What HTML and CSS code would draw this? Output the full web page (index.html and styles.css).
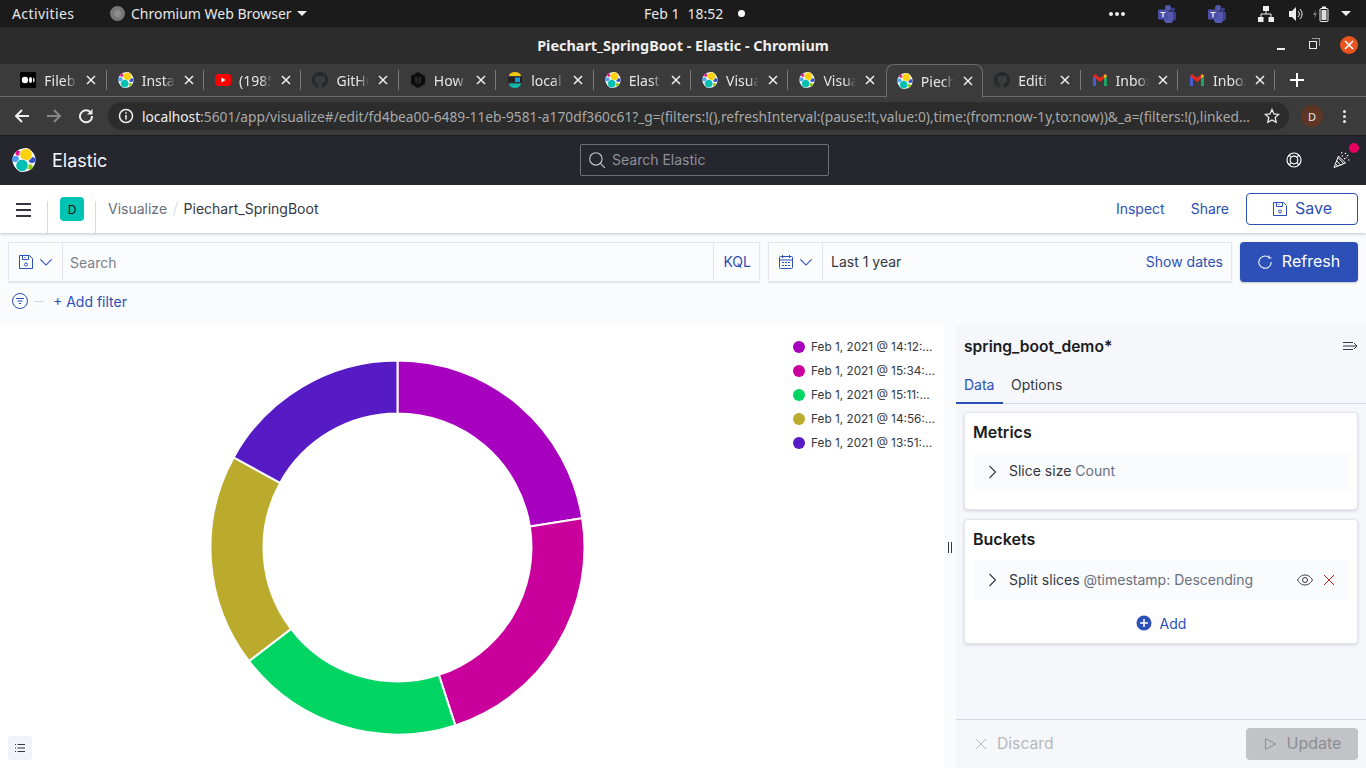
FILE: index.html
```html
<!DOCTYPE html>
<html lang="en">
<head>
  <meta charset="UTF-8">
  <title>Piechart_SpringBoot - Elastic - Chromium</title>
  <link rel="stylesheet" href="styles.css">
</head>
<body>
  <!-- Shared icons -->
  <svg class="defs" width="0" height="0">
    <symbol id="elastic" viewBox="0 0 24 24">
      <circle cx="12" cy="12" r="11.500" fill="#fff"/>
      <circle cx="3.600" cy="11" r="3.300" fill="#4ea1f0"/>
      <circle cx="6" cy="5" r="2.600" fill="#e7168b"/>
      <ellipse cx="20" cy="12" rx="3.400" ry="3" fill="#3453c4"/>
      <circle cx="18.200" cy="18.800" r="2.600" fill="#93c90e"/>
      <circle cx="14" cy="6.600" r="6.200" fill="#fed10a" stroke="#fff" stroke-width="0.800"/>
      <circle cx="10" cy="17.400" r="6.200" fill="#00bfb3" stroke="#fff" stroke-width="0.800"/>
    </symbol>
    <symbol id="github" viewBox="0 0 16 16">
      <path fill="#24292e" d="M8 0C3.58 0 0 3.58 0 8c0 3.54 2.29 6.53 5.47 7.59.4.07.55-.17.55-.38 0-.19-.01-.82-.01-1.49-2.01.37-2.53-.49-2.69-.94-.09-.23-.48-.94-.82-1.13-.28-.15-.68-.52-.01-.53.63-.01 1.08.58 1.23.82.72 1.21 1.87.87 2.33.66.07-.52.28-.87.51-1.07-1.78-.2-3.64-.89-3.64-3.95 0-.87.31-1.59.82-2.15-.08-.2-.36-1.02.08-2.12 0 0 .67-.21 2.2.82.64-.18 1.32-.27 2-.27s1.36.09 2 .27c1.53-1.04 2.2-.82 2.2-.82.44 1.1.16 1.92.08 2.12.51.56.82 1.27.82 2.15 0 3.07-1.87 3.75-3.65 3.95.29.25.54.73.54 1.48 0 1.07-.01 1.93-.01 2.2 0 .21.15.46.55.38A8.01 8.01 0 0 0 16 8c0-4.42-3.58-8-8-8z"/>
    </symbol>
    <symbol id="gmail" viewBox="0 0 16 16">
      <path fill="#4a5bd4" d="M1 4h3v10H1z"/>
      <path fill="#1ea362" d="M12 4h3v10h-3z"/>
      <path fill="#e8261c" d="M1 4l2-2 5 4 5-4 2 2-7 6z"/>
      <path fill="#f6c026" d="M13 2l2 2-3 2.400V4z"/>
    </symbol>
    <symbol id="close-x" viewBox="0 0 10 10">
      <path d="M1 1l8 8M9 1L1 9" stroke="currentColor" stroke-width="1.500" fill="none"/>
    </symbol>
    <symbol id="floppy" viewBox="0 0 16 16">
      <path d="M1.500 1.500h10l3 3v10h-13z M4.500 1.500v4h6v-4 M7 3v1" fill="none" stroke="currentColor"/>
      <circle cx="8" cy="10.500" r="1.500" fill="none" stroke="currentColor"/>
    </symbol>
    <symbol id="chevron-right" viewBox="0 0 16 16">
      <path d="M5.500 2l6 6-6 6" fill="none" stroke="currentColor" stroke-width="1.100"/>
    </symbol>
    <symbol id="chevron-down" viewBox="0 0 16 16">
      <path d="M1.500 5l6.500 6.500L14.500 5" fill="none" stroke="currentColor" stroke-width="1.300"/>
    </symbol>
    <symbol id="teams" viewBox="0 0 18 18">
      <circle cx="10" cy="3" r="3" fill="#5558af"/>
      <circle cx="15" cy="4.500" r="2" fill="#3d3f8f"/>
      <path fill="#3d3f8f" d="M12 7h6v6a3 3 0 0 1-6 0z"/>
      <path fill="#5558af" d="M6 6.500h9v8a4.500 4.500 0 0 1-9 0z"/>
      <rect x="0" y="4.500" width="10" height="10" rx="1" fill="#4b4fa6"/>
      <path fill="#fff" d="M2.500 7h5v1H5.600v4.200H4.400V8H2.500z"/>
    </symbol>
  </svg>

  <!-- Desktop top bar -->
  <div class="topbar">
    <div class="topbar-left">
      <span class="activities">Activities</span>
      <span class="app-icon"></span>
      <span>Chromium Web Browser</span>
      <span class="caret"></span>
    </div>
    <div class="topbar-clock">
      <span>Feb 1</span>
      <span>18:52</span>
      <span class="clock-dot"></span>
    </div>
    <div class="topbar-tray">
      <span class="tray-dots"><i></i><i></i><i></i></span>
      <svg class="tray-teams" width="18" height="18"><use href="#teams"/></svg>
      <svg class="tray-teams" width="18" height="18"><use href="#teams"/></svg>
      <svg class="tray-net" width="16" height="16" viewBox="0 0 16 16">
        <path d="M5 0h6v5H5zM0 11h5.500v5H0zM10.500 11H16v5h-5.500z" fill="#eee"/>
        <path d="M8 5v3M3 11V8h10v3" stroke="#eee" fill="none"/>
      </svg>
      <svg class="tray-vol" width="16" height="16" viewBox="0 0 16 16">
        <path d="M1 5h3l4-4v14l-4-4H1z" fill="#eee"/>
        <path d="M10 5a4 4 0 0 1 0 6M12 3a7 7 0 0 1 0 10" stroke="#eee" fill="none"/>
      </svg>
      <svg class="tray-bat" width="16" height="16" viewBox="0 0 16 16">
        <path d="M3 3L0 9h2l-1 4 3-6H2z" fill="#777"/>
        <rect x="7" y="2.500" width="8" height="13" rx="1" fill="none" stroke="#eee"/>
        <rect x="9" y="0.500" width="4" height="2" fill="#eee"/>
        <rect x="8.500" y="4" width="5" height="10" fill="#ddd"/>
      </svg>
      <span class="caret"></span>
    </div>
  </div>

  <!-- Window title -->
  <div class="titlebar">
    <span class="title">Piechart_SpringBoot - Elastic - Chromium</span>
    <div class="win-btns">
      <span class="win-min"></span>
      <span class="win-max"></span>
      <span class="win-close"><svg width="10" height="10"><use href="#close-x"/></svg></span>
    </div>
  </div>

  <!-- Tabs -->
  <div class="tabstrip">
    <div class="tab">
      <svg class="favicon" viewBox="0 0 16 16"><rect width="16" height="16" rx="1" fill="#000"/><circle cx="5" cy="8" r="3.200" fill="#fff"/><ellipse cx="10.500" cy="8" rx="1.500" ry="3" fill="#fff"/><ellipse cx="13.800" cy="8" rx="0.700" ry="2.600" fill="#fff"/></svg>
      <span class="tab-label">Fileb</span>
      <svg class="tab-x" width="10" height="10"><use href="#close-x"/></svg>
    </div>
    <div class="tab">
      <svg class="favicon"><use href="#elastic"/></svg>
      <span class="tab-label">Insta</span>
      <svg class="tab-x" width="10" height="10"><use href="#close-x"/></svg>
    </div>
    <div class="tab">
      <svg class="favicon" viewBox="0 0 16 16"><rect y="2" width="16" height="12" rx="3" fill="#f00"/><path d="M6.500 5.500v5l4-2.500z" fill="#fff"/></svg>
      <span class="tab-label">(1985</span>
      <svg class="tab-x" width="10" height="10"><use href="#close-x"/></svg>
    </div>
    <div class="tab">
      <svg class="favicon"><use href="#github"/></svg>
      <span class="tab-label">GitHu</span>
      <svg class="tab-x" width="10" height="10"><use href="#close-x"/></svg>
    </div>
    <div class="tab">
      <svg class="favicon" viewBox="0 0 16 16"><path d="M8 0l7 4v8l-7 4-7-4V4z" fill="#0d0d0d"/><path d="M5 5h6v5l-3 3-3-3z" fill="#2b2b2b"/><path d="M7.500 4h1v8h-1z" fill="#0d0d0d"/></svg>
      <span class="tab-label">How</span>
      <svg class="tab-x" width="10" height="10"><use href="#close-x"/></svg>
    </div>
    <div class="tab">
      <svg class="favicon" viewBox="0 0 16 16"><path d="M2 4a6 4 0 0 1 12 0z" fill="#f3c714"/><rect x="1" y="5" width="14" height="5.500" fill="#222"/><rect x="8" y="5.500" width="5" height="4.500" fill="#1b9ad6"/><path d="M2 11.500h12a6 4.500 0 0 1-12 0z" fill="#11b8aa"/></svg>
      <span class="tab-label">local</span>
      <svg class="tab-x" width="10" height="10"><use href="#close-x"/></svg>
    </div>
    <div class="tab">
      <svg class="favicon"><use href="#elastic"/></svg>
      <span class="tab-label">Elast</span>
      <svg class="tab-x" width="10" height="10"><use href="#close-x"/></svg>
    </div>
    <div class="tab">
      <svg class="favicon"><use href="#elastic"/></svg>
      <span class="tab-label">Visua</span>
      <svg class="tab-x" width="10" height="10"><use href="#close-x"/></svg>
    </div>
    <div class="tab tab-before-active">
      <svg class="favicon"><use href="#elastic"/></svg>
      <span class="tab-label">Visua</span>
      <svg class="tab-x" width="10" height="10"><use href="#close-x"/></svg>
    </div>
    <div class="tab tab-active">
      <svg class="favicon"><use href="#elastic"/></svg>
      <span class="tab-label">Piech</span>
      <svg class="tab-x" width="10" height="10"><use href="#close-x"/></svg>
    </div>
    <div class="tab">
      <svg class="favicon"><use href="#github"/></svg>
      <span class="tab-label">Editi</span>
      <svg class="tab-x" width="10" height="10"><use href="#close-x"/></svg>
    </div>
    <div class="tab">
      <svg class="favicon"><use href="#gmail"/></svg>
      <span class="tab-label">Inbox</span>
      <svg class="tab-x" width="10" height="10"><use href="#close-x"/></svg>
    </div>
    <div class="tab">
      <svg class="favicon"><use href="#gmail"/></svg>
      <span class="tab-label">Inbox</span>
      <svg class="tab-x" width="10" height="10"><use href="#close-x"/></svg>
    </div>
    <svg class="tab-new" width="14" height="14" viewBox="0 0 14 14"><path d="M7 0v14M0 7h14" stroke="#fff" stroke-width="2"/></svg>
  </div>

  <!-- Address bar -->
  <div class="addressbar">
    <svg class="nav-icon" width="16" height="16" viewBox="0 0 16 16"><path d="M15 8H2M8 2L2 8l6 6" fill="none" stroke="#eee" stroke-width="2"/></svg>
    <svg class="nav-icon" width="16" height="16" viewBox="0 0 16 16"><path d="M1 8h13M8 2l6 6-6 6" fill="none" stroke="#888" stroke-width="2"/></svg>
    <svg class="nav-icon" width="16" height="16" viewBox="0 0 16 16"><path d="M13 5a6 6 0 1 0 1 3" fill="none" stroke="#eee" stroke-width="2"/><path d="M14.500 1v5.500H9z" fill="#eee"/></svg>
    <div class="omnibox">
      <svg class="info" width="16" height="16" viewBox="0 0 16 16"><circle cx="8" cy="8" r="6.500" fill="none" stroke="#eee" stroke-width="1.500"/><path d="M7.200 7h1.600v4.500H7.200zM7.200 4.200h1.600v1.600H7.200z" fill="#eee"/></svg>
      <span class="url"><b>localhost</b>:5601/app/visualize#/edit/fd4bea00-6489-11eb-9581-a170df360c61?_g=(filters:!(),refreshInterval:(pause:!t,value:0),time:(from:now-1y,to:now))&amp;_a=(filters:!(),linked…</span>
      <svg class="star" width="16" height="16" viewBox="0 0 16 16"><path d="M8 1.500l2 4.400 4.700.5-3.500 3.200 1 4.700L8 11.900l-4.200 2.400 1-4.700L1.300 6.400 6 5.900z" fill="none" stroke="#eee" stroke-width="1.300"/></svg>
    </div>
    <span class="profile">D</span>
    <span class="kebab"><i></i><i></i><i></i></span>
  </div>

  <!-- Kibana header -->
  <header class="kbn-header">
    <svg class="kbn-logo" width="24" height="24"><use href="#elastic"/></svg>
    <span class="kbn-name">Elastic</span>
    <div class="kbn-search">
      <svg width="18" height="18" viewBox="0 0 16 16"><circle cx="7" cy="7" r="5.500" fill="none" stroke="#c6c7cc"/><path d="M11 11l4 4" stroke="#c6c7cc"/></svg>
      <span>Search Elastic</span>
    </div>
    <svg class="kbn-help" width="16" height="16" viewBox="0 0 16 16" fill="none" stroke="#fff" stroke-width="1.200"><circle cx="8" cy="8" r="7"/><circle cx="8" cy="8" r="3.800"/><path d="M3 3l2.300 2.300M13 3l-2.300 2.300M3 13l2.300-2.300M13 13l-2.300-2.300"/></svg>
    <div class="kbn-news">
      <svg width="18" height="18" viewBox="0 0 18 18" fill="none" stroke="#fff"><path d="M1 16.500L5.500 5l7 7z"/><path d="M3.500 9.500l4.500 5M2.500 12.500l2.500 3M5 6.500l6 6.500"/><path d="M9 5.500l1.500-2M11 8l3-1.500M8.500 2.500l.5-1.500M12 3l1-1M14 5l2-1M15 9h2" stroke-width="1.100" stroke-dasharray="1.500 1"/></svg>
      <span class="news-dot"></span>
    </div>
  </header>

  <!-- Breadcrumbs -->
  <div class="crumbbar">
    <span class="burger"><i></i><i></i><i></i></span>
    <div class="space-cell"><span class="space-badge">D</span></div>
    <nav class="crumbs">
      <span class="crumb-link">Visualize</span>
      <span class="crumb-sep"></span>
      <span class="crumb-now">Piechart_SpringBoot</span>
    </nav>
    <div class="crumb-actions">
      <a>Inspect</a>
      <a>Share</a>
      <button class="btn-save"><svg width="16" height="16"><use href="#floppy"/></svg><span>Save</span></button>
    </div>
  </div>

  <!-- Query bar -->
  <div class="querybar">
    <div class="query-row">
      <div class="query-box">
        <span class="query-pre"><svg width="16" height="16"><use href="#floppy"/></svg><svg width="14" height="14"><use href="#chevron-down"/></svg></span>
        <span class="query-input">Search</span>
        <span class="query-kql"><span>KQL</span></span>
      </div>
      <div class="date-box">
        <span class="query-pre date-pre">
          <svg width="16" height="16" viewBox="0 0 16 16" fill="none" stroke="currentColor"><rect x="1.500" y="2.500" width="13" height="12" rx="1"/><path d="M1.500 6h13M4.500 1v3M11.500 1v3M4 8.500h2M7 8.500h2M10 8.500h2M4 11.500h2M7 11.500h2M10 11.500h2"/></svg>
          <svg width="14" height="14"><use href="#chevron-down"/></svg>
        </span>
        <span class="date-text">Last 1 year</span>
        <span class="date-show">Show dates</span>
      </div>
      <button class="btn-refresh">
        <svg width="14" height="14" viewBox="0 0 16 16" fill="none" stroke="#fff" stroke-width="1.200"><path d="M12.500 2.800A7 7 0 1 0 15 8"/><path d="M12.500 0.500v3h3"/></svg>
        <span>Refresh</span>
      </button>
    </div>
    <div class="filter-row">
      <svg class="filter-icon" width="18" height="18" viewBox="0 0 18 18" fill="none" stroke="#2c4fb8"><circle cx="9" cy="9" r="7.500"/><path d="M5 6.500h8M6.500 9h5M8 11.500h2"/></svg>
      <span class="filter-dash"></span>
      <a class="add-filter">+ Add filter</a>
    </div>
  </div>

  <!-- Visualization + editor -->
  <main class="workspace">
    <section class="chart-panel">
      <div class="pie-area">
        <svg class="pie" width="375" height="375" viewBox="0 0 375 375">
          <g stroke="#fff" stroke-width="2">
            <path fill="#a800bf" d="M187.500 0.500A187 187 0 0 1 372.200 158.250L319.850 166.540A134 134 0 0 0 187.500 53.500Z"/>
            <path fill="#c9009c" d="M372.200 158.250A187 187 0 0 1 245.300 365.350L228.900 314.900A134 134 0 0 0 319.850 166.540Z"/>
            <path fill="#00d563" d="M245.300 365.350A187 187 0 0 1 38.950 301.100L81.050 268.900A134 134 0 0 0 228.900 314.900Z"/>
            <path fill="#bbab2c" d="M38.950 301.100A187 187 0 0 1 23.600 97.400L70.100 122.900A134 134 0 0 0 81.050 268.900Z"/>
            <path fill="#561bc4" d="M23.600 97.400A187 187 0 0 1 187.500 0.500L187.500 53.500A134 134 0 0 0 70.100 122.900Z"/>
          </g>
        </svg>
      </div>
      <ul class="legend">
        <li><i class="dot dot-1"></i>Feb 1, 2021 @ 14:12:…</li>
        <li><i class="dot dot-2"></i>Feb 1, 2021 @ 15:34:…</li>
        <li><i class="dot dot-3"></i>Feb 1, 2021 @ 15:11:…</li>
        <li><i class="dot dot-4"></i>Feb 1, 2021 @ 14:56:…</li>
        <li><i class="dot dot-5"></i>Feb 1, 2021 @ 13:51:…</li>
      </ul>
      <button class="legend-toggle">
        <svg width="12" height="12" viewBox="0 0 12 12" stroke="#343741"><path d="M3.500 2.500H11M3.500 6H11M3.500 9.500H11M1 2.500h1M1 6h1M1 9.500h1"/></svg>
      </button>
    </section>

    <div class="resizer"><i></i><i></i></div>

    <aside class="editor">
      <div class="editor-head">
        <h2>spring_boot_demo*</h2>
        <svg width="16" height="12" viewBox="0 0 16 12" fill="none" stroke="#343741"><path d="M1 2.500h10M1 6h14M1 9.500h10M12 3l3 3-3 3"/></svg>
      </div>
      <div class="editor-tabs">
        <span class="etab etab-on">Data</span>
        <span class="etab">Options</span>
      </div>
      <div class="editor-body">
        <div class="card">
          <h3>Metrics</h3>
          <div class="agg agg-metric">
            <svg width="16" height="16"><use href="#chevron-right"/></svg>
            <span>Slice size <em>Count</em></span>
          </div>
        </div>
        <div class="card">
          <h3>Buckets</h3>
          <div class="agg">
            <svg width="16" height="16"><use href="#chevron-right"/></svg>
            <span>Split slices <em>@timestamp: Descending</em></span>
            <svg class="agg-eye" width="16" height="16" viewBox="0 0 16 16" fill="none" stroke="#343741"><path d="M0.500 8C3 4 5.500 3 8 3s5 1 7.500 5c-2.500 4-5 5-7.500 5s-5-1-7.500-5z"/><circle cx="8" cy="8" r="2.500"/></svg>
            <svg class="agg-del" width="12" height="12" viewBox="0 0 12 12"><path d="M1 1l10 10M11 1L1 11" stroke="#bd271e"/></svg>
          </div>
          <div class="add-row">
            <svg width="16" height="16" viewBox="0 0 16 16"><circle cx="8" cy="8" r="7.500" fill="#2c4fb8"/><path d="M8 4v8M4 8h8" stroke="#fff" stroke-width="1.500"/></svg>
            <span>Add</span>
          </div>
        </div>
      </div>
      <div class="editor-foot">
        <span class="discard"><svg width="12" height="12" viewBox="0 0 12 12"><path d="M1 1l10 10M11 1L1 11" stroke="#b5b7bd"/></svg><span>Discard</span></span>
        <button class="btn-update"><svg width="14" height="14" viewBox="0 0 14 14" fill="none" stroke="#8c8e94"><path d="M2.500 1.500l10 5.500-10 5.500z"/></svg><span>Update</span></button>
      </div>
    </aside>
  </main>
</body>
</html>
```

FILE: styles.css
```css
/* General */
* {
  box-sizing: border-box;
}

body {
  margin: 0;
  width: 1366px;
  height: 768px;
  overflow: hidden;
  font-family: 'Inter', sans-serif;
  background: #fafbfd;
  color: #343741;
}

i {
  display: block;
}

.defs {
  position: absolute;
}

/* Desktop top bar */
.topbar {
  height: 27px;
  background: #1b1b1b;
  color: #e8e8e8;
  font-family: 'Noto Sans', sans-serif;
  font-size: 14px;
  display: flex;
  align-items: center;
}

.topbar-left {
  width: 644px;
  display: flex;
  align-items: center;
  padding-left: 12px;
}

.activities {
  width: 98px;
  letter-spacing: 0.400px;
}

.app-icon {
  width: 15px;
  height: 15px;
  border-radius: 50%;
  background: #8d8d8d;
  border: 4px solid #777;
  margin-right: 6px;
}

.caret {
  width: 0;
  height: 0;
  border-left: 5px solid transparent;
  border-right: 5px solid transparent;
  border-top: 5px solid #eee;
  margin-left: 5px;
}

.topbar-clock {
  display: flex;
  align-items: center;
  gap: 8px;
}

.clock-dot {
  width: 7px;
  height: 7px;
  border-radius: 50%;
  background: #fff;
  margin-left: 7px;
}

.topbar-tray {
  margin-left: auto;
  display: flex;
  align-items: center;
  padding-right: 15px;
}

.tray-dots {
  display: flex;
  gap: 2px;
  margin-right: 33px;
}

.tray-dots i {
  width: 4px;
  height: 4px;
  border-radius: 50%;
  background: #eee;
}

.tray-teams {
  margin-right: 32px;
}

.tray-net {
  margin-right: 14px;
}

.tray-vol {
  margin-right: 9px;
}

.tray-bat {
  margin-right: 7px;
}

/* Title bar */
.titlebar {
  height: 37px;
  background: #2c2c2c;
  display: flex;
  align-items: center;
  justify-content: center;
  position: relative;
}

.title {
  color: #eee;
  font-family: 'Noto Sans', sans-serif;
  font-weight: 700;
  font-size: 14.400px;
}

.win-btns {
  position: absolute;
  right: 8px;
  top: 9px;
  display: flex;
  align-items: center;
  gap: 24px;
}

.win-min {
  width: 8px;
  height: 2px;
  background: #eee;
  margin-top: 8px;
}

.win-max {
  width: 8px;
  height: 8px;
  border: 1.500px solid #eee;
  position: relative;
}

.win-max::after {
  content: "";
  position: absolute;
  top: -4px;
  right: -4px;
  width: 7px;
  height: 7px;
  border-top: 1px solid #999;
  border-right: 1px solid #999;
}

.win-close {
  width: 18px;
  height: 18px;
  border-radius: 50%;
  background: #e95420;
  color: #fff;
  display: flex;
  align-items: center;
  justify-content: center;
  margin-left: -1px;
}

/* Tabs */
.tabstrip {
  height: 33px;
  background: #3b3b3b;
  border-bottom: 1px solid #6b6b6b;
  padding-left: 9.300px;
  display: flex;
  align-items: center;
  color: #e6e6e6;
  font-family: 'Noto Sans', sans-serif;
  font-size: 14px;
}

.tab {
  width: 97.400px;
  height: 20px;
  padding-left: 11px;
  display: flex;
  align-items: center;
  border-right: 1px solid #7b7b7b;
  position: relative;
}

.tab-before-active {
  border-right-color: transparent;
}

.tab-active {
  height: 34px;
  margin-top: 0;
  background: #3b3b3b;
  border: 1px solid #6b6b6b;
  border-bottom-color: #3b3b3b;
  border-radius: 8px 8px 0 0;
  padding-left: 10px;
  top: 1px;
}

.favicon {
  width: 16px;
  height: 16px;
  flex: none;
}

/* label runs under the close button, the mask fades it out before that */
.tab-label {
  width: 42px;
  margin-left: 8px;
  margin-right: -9px;
  white-space: nowrap;
  -webkit-mask-image: linear-gradient(to right, #000 22px, transparent 33px);
  mask-image: linear-gradient(to right, #000 22px, transparent 33px);
}

.tab-x {
  margin-left: 9px;
  color: #f0f0f0;
}

.tab-new {
  margin-left: 15px;
}

/* Address bar */
.addressbar {
  height: 38px;
  background: #3b3b3b;
  display: flex;
  align-items: center;
  padding-left: 14px;
  font-family: 'Noto Sans', sans-serif;
}

.nav-icon {
  margin-right: 16px;
  flex: none;
}

.omnibox {
  width: 1181px;
  height: 28px;
  margin-left: -2px;
  background: #2c2c2c;
  border-radius: 14px;
  display: flex;
  align-items: center;
  padding-left: 10px;
}

.url {
  margin-left: 8px;
  width: 1110px;
  font-size: 13.760px;
  color: #a8a8a8;
  white-space: nowrap;
  overflow: hidden;
}

.url b {
  font-weight: 400;
  color: #f0f0f0;
}

.star {
  margin-left: 12px;
  flex: none;
}

.profile {
  width: 22px;
  height: 22px;
  margin-left: 12px;
  border-radius: 50%;
  background: #5d3626;
  color: #e6e6e6;
  font-size: 11px;
  display: flex;
  align-items: center;
  justify-content: center;
  flex: none;
}

.kebab {
  margin-left: 20px;
  display: flex;
  flex-direction: column;
  gap: 2px;
}

.kebab i {
  width: 3px;
  height: 3px;
  border-radius: 50%;
  background: #eee;
}

/* Kibana header */
.kbn-header {
  height: 50px;
  background: #25262e;
  border-top: 1px solid #1d1d1f;
  display: flex;
  align-items: center;
  padding: 0 0 1px 12px;
  color: #f5f7fa;
}

.kbn-name {
  font-size: 18px;
  margin-left: 16px;
  width: 528px;
}

.kbn-search {
  width: 249px;
  height: 32px;
  border: 1px solid #6f7075;
  border-radius: 2px;
  display: flex;
  align-items: center;
  gap: 6px;
  padding-left: 7px;
  font-size: 14px;
  color: #8f9199;
}

.kbn-search span {
  margin-bottom: 2px;
}

.kbn-help {
  margin-left: 457px;
}

.kbn-news {
  margin-left: 31px;
  position: relative;
  height: 18px;
}

.news-dot {
  position: absolute;
  top: -8px;
  left: 16px;
  width: 10px;
  height: 10px;
  border-radius: 50%;
  background: #e7005f;
}

/* Breadcrumbs */
.crumbbar {
  height: 48px;
  background: #fff;
  display: flex;
  align-items: center;
  box-shadow: 0 1px 3px rgba(60, 70, 100, 0.3);
  position: relative;
}

.burger {
  width: 48px;
  align-self: stretch;
  margin-top: 16px;
  padding: 2px 16px 0;
  display: flex;
  flex-direction: column;
  gap: 4px;
  border-right: 1px solid #d3dae6;
}

.burger i {
  height: 2px;
  background: #343741;
}

.space-cell {
  width: 48px;
  align-self: stretch;
  margin-top: 16px;
  border-right: 1px solid #d3dae6;
  padding-left: 12px;
}

.space-badge {
  display: flex;
  align-items: center;
  justify-content: center;
  width: 24px;
  height: 24px;
  margin-top: -4px;
  background: #00c4b3;
  border-radius: 4px;
  font-size: 12px;
  color: #111;
}

.crumbs {
  display: flex;
  align-items: center;
  font-size: 14px;
  margin-left: 12px;
  margin-bottom: 2px;
}

.crumb-link {
  color: #69707d;
}

.crumb-sep {
  width: 1px;
  height: 15px;
  background: #d3dae6;
  transform: rotate(15deg);
  margin: 0 7.500px 0 8px;
}

.crumb-now {
  color: #343741;
}

.crumb-actions {
  margin-left: auto;
  padding-right: 8px;
  display: flex;
  align-items: center;
  font-size: 14px;
  color: #2c4fb8;
}

.crumb-actions a {
  margin-right: 26px;
  margin-bottom: 2px;
}

.crumb-actions a:last-of-type {
  margin-right: 17px;
}

.btn-save {
  width: 112px;
  height: 32px;
  background: #fff;
  border: 1px solid #2c4fb8;
  border-radius: 4px;
  color: #2c4fb8;
  font: inherit;
  font-size: 16px;
  display: flex;
  align-items: center;
  justify-content: center;
  gap: 7px;
}

.btn-save span,
.btn-refresh span,
.btn-update span,
.discard span,
.query-kql span {
  margin-bottom: 2px;
}

/* Query bar */
.querybar {
  height: 92px;
  padding: 9px 8px 0;
}

.query-row {
  display: flex;
  gap: 8px;
  height: 40px;
}

.query-box,
.date-box {
  display: flex;
  align-items: center;
  height: 40px;
  background: #fbfcfd;
  border: 1px solid #e3e6ef;
  box-shadow: 0 1px 1px rgba(60, 70, 100, 0.1);
  font-size: 14px;
  color: #2c4fb8;
}

.query-box {
  width: 752px;
}

.date-box {
  width: 464px;
}

.query-pre {
  width: 54px;
  height: 38px;
  padding-left: 9px;
  display: flex;
  align-items: center;
  gap: 5px;
  border-right: 1px solid #e3e6ef;
  color: #2c4fb8;
  flex: none;
}

.query-input {
  flex: 1;
  padding-left: 7px;
  color: #7b7f88;
}

.query-kql {
  height: 38px;
  display: flex;
  align-items: center;
  padding: 0 8px 0 9px;
  border-left: 1px solid #e3e6ef;
}

.date-text {
  flex: 1;
  padding-left: 8px;
  padding-bottom: 2px;
  color: #343741;
}

.date-show {
  padding-right: 8px;
  padding-bottom: 2px;
}

.btn-refresh {
  width: 118px;
  height: 40px;
  background: #2c4fb8;
  border: none;
  border-radius: 4px;
  color: #fff;
  font: inherit;
  font-size: 16px;
  display: flex;
  align-items: center;
  justify-content: center;
  gap: 10px;
  box-shadow: 0 1px 2px rgba(60, 70, 100, 0.3);
}

.filter-row {
  display: flex;
  align-items: center;
  margin-top: 10px;
  padding-left: 3px;
  font-size: 14px;
  color: #2c4fb8;
}

.filter-dash {
  width: 10px;
  height: 1px;
  background: #d3dae6;
  margin: 0 9px 0 5px;
}

/* Workspace */
.workspace {
  height: 443px;
  display: flex;
}

.chart-panel {
  width: 944px;
  background: #fff;
  display: flex;
  position: relative;
}

.pie-area {
  width: 794px;
  padding-top: 2px;
  display: flex;
  align-items: center;
  justify-content: center;
}

.pie {
  display: block;
}

.legend {
  list-style: none;
  margin: 0 0 0 -1px;
  padding: 10px 0 0;
  flex: 1;
  font-size: 11.800px;
  color: #343741;
}

.legend li {
  height: 24px;
  display: flex;
  align-items: center;
  white-space: nowrap;
  padding-bottom: 1px;
}

.dot {
  width: 12px;
  height: 12px;
  border-radius: 50%;
  margin-right: 6px;
}

.dot-1 { background: #a800bf; }
.dot-2 { background: #c9009c; }
.dot-3 { background: #00d563; }
.dot-4 { background: #bbab2c; }
.dot-5 { background: #561bc4; }

.legend-toggle {
  position: absolute;
  left: 8px;
  bottom: 8px;
  width: 24px;
  height: 24px;
  padding: 0;
  background: #f0f3f8;
  border: none;
  border-radius: 4px;
  display: flex;
  align-items: center;
  justify-content: center;
}

.resizer {
  width: 12px;
  background: #fafbfd;
  display: flex;
  align-items: center;
  justify-content: center;
  gap: 2px;
  padding-top: 2px;
}

.resizer i {
  width: 1px;
  height: 11px;
  background: #343741;
}

/* Editor sidebar */
.editor {
  flex: 1;
  background: #f5f7fa;
  display: flex;
  flex-direction: column;
}

.editor-head {
  height: 42px;
  padding: 0 8px;
  display: flex;
  align-items: center;
  justify-content: space-between;
}

.editor-head h2 {
  margin: 0;
  font-size: 15.600px;
  font-weight: 600;
  color: #1a1c21;
}

.editor-tabs {
  height: 37px;
  border-bottom: 1px solid #d3dae6;
  display: flex;
  font-size: 14px;
}

.etab {
  padding: 0 8px 2px;
  display: flex;
  align-items: center;
  height: 37px;
  color: #343741;
}

.etab-on {
  color: #2c4fb8;
  border-bottom: 2px solid #2c4fb8;
  width: 47px;
  padding-bottom: 0;
}

.editor-body {
  flex: 1;
  padding: 8px 8px 0;
  display: flex;
  flex-direction: column;
  gap: 9px;
}

.card {
  background: #fff;
  border: 1px solid #e3e6ef;
  border-radius: 4px;
  box-shadow: 0 1px 3px rgba(60, 70, 100, 0.2);
  padding: 8px;
}

.card h3 {
  margin: 0;
  font-size: 16px;
  line-height: 22px;
  font-weight: 600;
  color: #1a1c21;
}

.agg {
  height: 40px;
  margin-top: 10px;
  background: #fafbfd;
  border-radius: 2px;
  display: flex;
  align-items: center;
  padding-left: 11px;
  font-size: 14px;
  color: #343741;
}

.agg-metric {
  height: 37px;
  margin-bottom: 11px;
}

.agg > span {
  margin-left: 9px;
  margin-bottom: 2px;
}

.agg em {
  font-style: normal;
  color: #69707d;
}

.agg-eye {
  margin-left: auto;
}

.agg-del {
  margin-left: 10px;
  margin-right: 14px;
}

.add-row {
  height: 24px;
  margin-top: 11px;
  display: flex;
  align-items: center;
  justify-content: center;
  gap: 8px;
  font-size: 14px;
  color: #2c4fb8;
}

.editor-foot {
  height: 49px;
  border-top: 1px solid #d3dae6;
  display: flex;
  align-items: center;
  justify-content: space-between;
  padding: 0 8px 0 19px;
}

.discard {
  display: flex;
  align-items: center;
  gap: 10px;
  font-size: 15.700px;
  color: #b5b7bd;
}

.btn-update {
  width: 112px;
  height: 32px;
  background: #c2c3c6;
  border: none;
  border-radius: 4px;
  color: #8c8e94;
  font: inherit;
  font-size: 16px;
  display: flex;
  align-items: center;
  justify-content: center;
  gap: 10px;
}
```
